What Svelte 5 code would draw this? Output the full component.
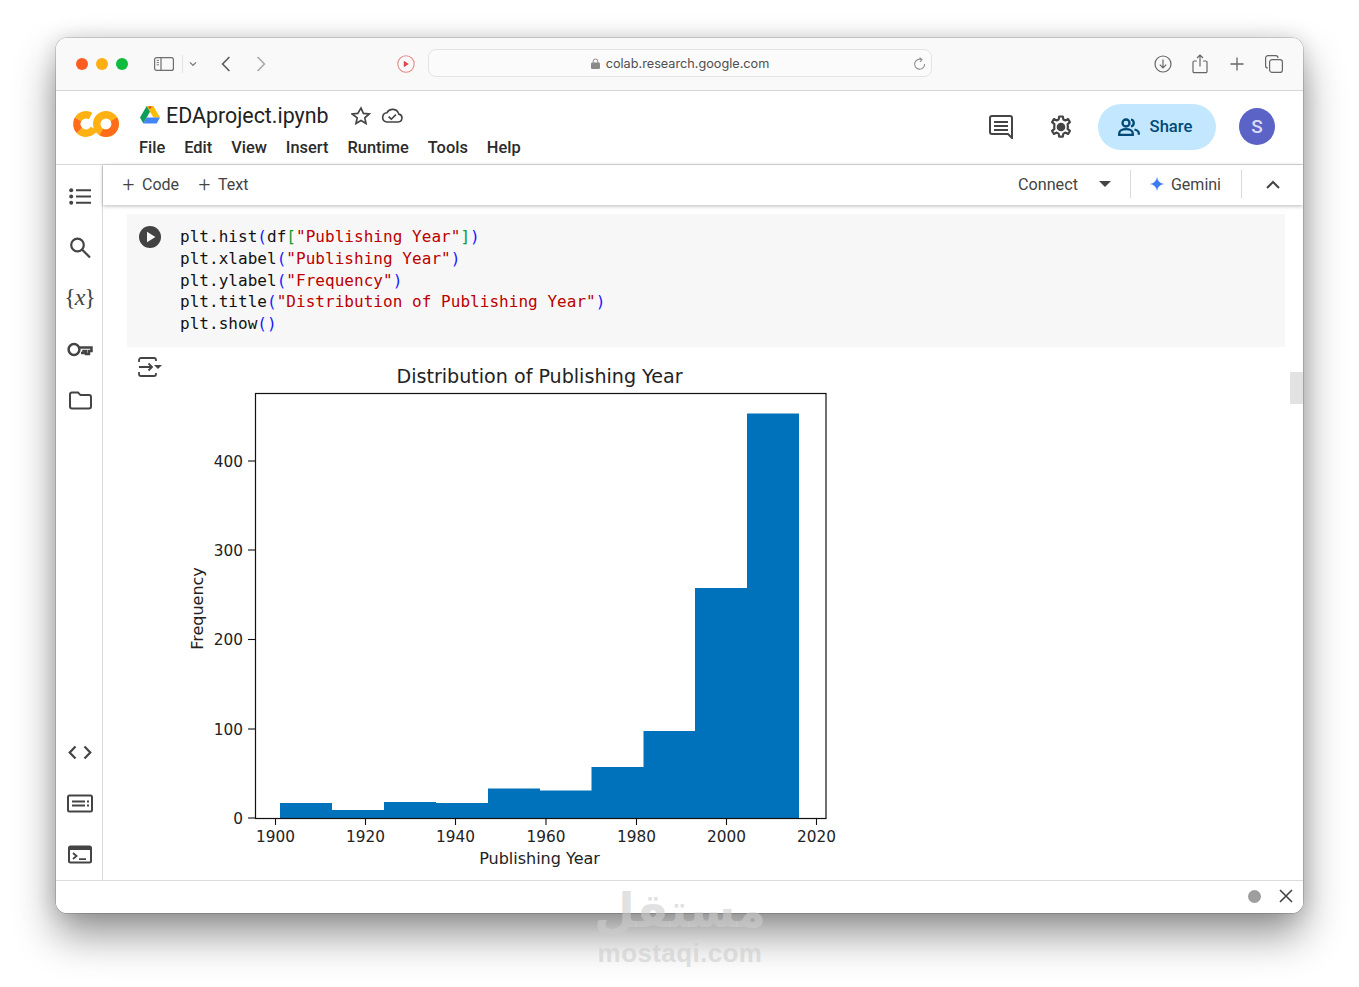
<script>
  const menus = ['File', 'Edit', 'View', 'Insert', 'Runtime', 'Tools', 'Help'];
  const bars = [
    [280, 803], [332, 810], [384, 802], [436, 803], [488, 788.5],
    [540, 790.5], [591.5, 767], [643.5, 731], [695, 588], [747, 413.5]
  ];
  const barPath = 'M280 818 ' + bars.map((b, i) => `L${b[0]} ${b[1]} L${i < 9 ? bars[i + 1][0] : 799} ${b[1]}`).join(' ') + ' L799 818Z';
  const xTicks = [[275.5, 1900], [365.5, 1920], [455.5, 1940], [546, 1960], [636.5, 1980], [726.5, 2000], [816.5, 2020]];
  const yTicks = [[818, 0], [729, 100], [639.5, 200], [550, 300], [461, 400]];
</script>

<div class="page">
  <div class="window">
    <header class="browser">
      <div class="lights"><i class="r"></i><i class="y"></i><i class="gr"></i></div>
      <svg class="side" width="20" height="14" viewBox="0 0 20 14" fill="none" stroke="#6e6e6e" stroke-width="1.2"><rect x=".6" y=".6" width="18.8" height="12.8" rx="2"/><path d="M7 .6v12.8"/><path d="M2.6 3.4h2.4M2.6 5.6h2.4M2.6 7.8h2.4" stroke-width=".9"/></svg>
      <span class="vsep"></span>
      <svg class="chev" width="8" height="6" viewBox="0 0 8 6" fill="none" stroke="#777" stroke-width="1.3"><path d="M1 1.4l3 3 3-3"/></svg>
      <svg class="back" width="10" height="16" viewBox="0 0 10 16" fill="none" stroke="#5a5a5a" stroke-width="1.6"><path d="M8.4 1L1.6 8l6.8 7"/></svg>
      <svg class="fwd" width="10" height="16" viewBox="0 0 10 16" fill="none" stroke="#a8a8a8" stroke-width="1.6"><path d="M1.6 1l6.8 7-6.8 7"/></svg>
      <svg class="rec" width="18" height="18" viewBox="0 0 18 18"><circle cx="9" cy="9" r="8.2" fill="none" stroke="#e28a8a" stroke-width="1.1"/><path d="M6.8 5.8l5 3.2-5 3.2z" fill="#d9484f"/></svg>
      <div class="url">
        <svg width="9" height="11" viewBox="0 0 9 11"><path d="M2.2 5V3.3a2.3 2.3 0 014.6 0V5" fill="none" stroke="#8a8a8a" stroke-width="1"/><rect y="4.6" width="9" height="6.4" rx="1.2" fill="#8a8a8a"/></svg>
        <span>colab.research.google.com</span>
        <svg class="reload" width="13" height="14" viewBox="0 0 13 14" fill="none" stroke="#8c8c8c" stroke-width="1.1"><path d="M8.6 2.6A5 5 0 1 0 11.6 7"/><path d="M6.6 .6l2.4 2-2 2.4"/></svg>
      </div>
      <div class="browser-right">
        <span><svg width="18" height="18" viewBox="0 0 18 18" fill="none" stroke="#666" stroke-width="1.2"><circle cx="9" cy="9" r="8"/><path d="M9 4.6v8M5.8 9.6L9 12.8l3.2-3.2"/></svg></span>
        <span><svg width="16" height="20" viewBox="0 0 16 20" fill="none" stroke="#666" stroke-width="1.2"><path d="M5 7H2.2a1.2 1.2 0 00-1.2 1.2v9.2a1.2 1.2 0 001.2 1.2h11.6a1.2 1.2 0 001.2-1.2V8.2A1.2 1.2 0 0013.800 7H11"/><path d="M8 12.500V1.200M5 4l3-3 3 3"/></svg></span>
        <span><svg width="14" height="14" viewBox="0 0 14 14" fill="none" stroke="#666" stroke-width="1.3"><path d="M7 .5v13M.5 7h13"/></svg></span>
        <span><svg width="18" height="18" viewBox="0 0 18 18" fill="none" stroke="#666" stroke-width="1.2"><rect x="4.600" y="4.600" width="12.800" height="12.800" rx="2.500"/><path d="M2.900 13A2.300 2.300 0 01.600 10.700V3A2.400 2.400 0 013 .6h7.700A2.300 2.300 0 0113 2.900"/></svg></span>
      </div>
    </header>

    <section class="head">
      <svg class="logo" width="48" height="28" viewBox="0 0 48 28" fill="none" stroke-width="7.500">
        <path d="M7.500 20.500A9.250 9.250 0 0 0 22 18.600" stroke="#ffb114"/>
        <path d="M18.600 6A9.250 9.250 0 0 0 6 9.400" stroke="#ffb114"/>
        <path d="M6 9.400A9.250 9.250 0 0 0 7.500 20.500" stroke="#ff6d1b"/>
        <circle cx="34" cy="14" r="9.250" stroke="#ffb114"/>
        <path d="M42 9.400A9.250 9.250 0 0 1 29.400 22" stroke="#ff6d1b"/>
      </svg>
      <div class="doc">
        <div class="doc-title">
          <svg class="drive" width="20" height="18" viewBox="0 0 20 18"><path d="M6.700 0h6.600l6.700 11.600h-6.600z" fill="#fbbc04"/><path d="M6.700 0L0 11.600l3.300 5.800L10 5.800z" fill="#0f9d58"/><path d="M6.700 11.600H20l-3.300 5.800H3.300z" fill="#4285f4"/><path d="M8 .4h4L10 3.200z" fill="#ea4335"/></svg>
          <span class="name">EDAproject.ipynb</span>
          <svg class="star" width="20" height="19" viewBox="0 0 24 23" fill="none" stroke="#444" stroke-width="2"><path d="M12 2.500l2.900 6.400 7 .7-5.300 4.700 1.500 6.900-6.100-3.600-6.100 3.600 1.500-6.900L1.100 9.600l7-.7z"/></svg>
          <svg class="cloud" width="22" height="15" viewBox="0 0 22 15" fill="none" stroke="#444" stroke-width="1.600"><path d="M5.500 14h11.700a4 4 0 00.600-7.900A6.400 6.400 0 006 4.700 4.700 4.700 0 005.500 14z"/><path d="M7.600 8.600l2.700 2.600 4.600-4.600"/></svg>
        </div>
        <nav class="menu">{#each menus as m}<span>{m}</span>{/each}</nav>
      </div>
      <div class="head-right">
        <svg class="cmt" width="24" height="24" viewBox="0 0 24 24"><path d="M23 3a2 2 0 00-2-2H3a2 2 0 00-2 2v14a2 2 0 002 2h16l4 4z" fill="none" stroke="#444" stroke-width="2"/><path d="M5 6h14v2H5zM5 10h14v2H5zM5 14h14v2H5z" fill="#444"/></svg>
        <svg class="gear" width="24" height="24" viewBox="0 0 24 24" fill="none" stroke="#444" stroke-width="2.200"><path d="M10.200 1.500h3.600l.6 3 1.900.9 2.800-1.300 1.800 3-2.300 2 .2 1.900.1 1-.3 1.900 2.300 2-1.800 3-2.800-1.300-1.900 1-.6 3h-3.600l-.6-3-1.900-1-2.800 1.300-1.800-3 2.300-2-.2-1.900.1-1 .1-1.900-2.300-2 1.800-3 2.800 1.300 1.900-.9z" stroke-linejoin="round"/><circle cx="12" cy="12" r="4.300" fill="#444" stroke="none"/></svg>
        <button class="share">
          <svg width="22" height="18" viewBox="0 0 22 18" fill="none" stroke="#004a77" stroke-width="2.300"><circle cx="8" cy="5" r="3.500"/><path d="M1.200 16.800v-1.400c0-2.800 3.300-4.200 6.800-4.200s6.800 1.400 6.800 4.200v1.400z"/><path d="M13 1.500a3.600 3.600 0 010 7M16.500 11.500c2.500.6 4.300 1.800 4.300 3.900v1.400"/></svg>
          Share
        </button>
        <span class="avatar">S</span>
      </div>
    </section>

    <section class="body">
      <aside class="rail">
        <div class="rail-group">
          <svg width="22" height="18" viewBox="0 0 22 18" fill="#444"><circle cx="2.200" cy="2.800" r="2"/><circle cx="2.200" cy="9" r="2"/><circle cx="2.200" cy="15.200" r="2"/><path d="M7 1.800h15v2H7zM7 8h15v2H7zM7 14.200h15v2H7z"/></svg>
          <svg width="22" height="22" viewBox="0 0 22 22" fill="none" stroke="#444" stroke-width="2.200"><circle cx="8.500" cy="8.500" r="6.300"/><path d="M13 13l8 8"/></svg>
          <span class="var">{'{'}<em>x</em>{'}'}</span>
          <svg width="26" height="16" viewBox="0 0 26 16" fill="none" stroke="#444" stroke-width="2.500"><circle cx="7" cy="8" r="5.400"/><path d="M12 6h12.500v3.600H22v3h-3V9.600h-2.500v2H14"/></svg>
          <svg width="23" height="18" viewBox="0 0 23 18" fill="none" stroke="#444" stroke-width="2"><path d="M1 3a2 2 0 012-2h6l2.500 2.600H20a2 2 0 012 2V15a2 2 0 01-2 2H3a2 2 0 01-2-2z"/></svg>
        </div>
        <div class="rail-group bottom">
          <svg width="24" height="14" viewBox="0 0 24 14" fill="none" stroke="#444" stroke-width="2.200"><path d="M7.500 1L1.700 7l5.800 6M16.500 1l5.800 6-5.800 6"/></svg>
          <svg width="26" height="18" viewBox="0 0 26 18"><rect x="1" y="1" width="24" height="16" rx="1.500" fill="none" stroke="#444" stroke-width="2"/><path d="M5 6h13v2H5zM5 10h13v2H5zM20 6h2v2h-2zM20 10h2v2h-2z" fill="#444"/></svg>
          <svg width="24" height="18" viewBox="0 0 24 18"><rect x="1" y="1" width="22" height="16" rx="1.500" fill="none" stroke="#444" stroke-width="2"/><path d="M1 1h22v3.500H1z" fill="#444"/><path d="M5 7.500l3.500 3-3.500 3" fill="none" stroke="#444" stroke-width="1.800"/><path d="M11 12.800h7v1.700h-7z" fill="#444"/></svg>
        </div>
      </aside>

      <div class="main">
        <div class="toolbar">
          <span class="tbtn"><b>+</b>Code</span>
          <span class="tbtn"><b>+</b>Text</span>
          <span class="spacer"></span>
          <span class="connect">Connect</span>
          <svg class="caret" width="12" height="6" viewBox="0 0 12 6"><path d="M0 0h12L6 6z" fill="#444"/></svg>
          <span class="tsep"></span>
          <svg class="spark" width="14" height="14" viewBox="0 0 14 14"><path d="M7 0c.6 4 3 6.400 7 7-4 .6-6.400 3-7 7-.6-4-3-6.400-7-7 4-.6 6.400-3 7-7z" fill="#3f7df5"/></svg>
          <span class="gemini">Gemini</span>
          <span class="tsep two"></span>
          <svg class="up" width="14" height="9" viewBox="0 0 14 9" fill="none" stroke="#444" stroke-width="2"><path d="M1 8l6-6 6 6"/></svg>
        </div>

        <div class="scroll">
          <div class="cell">
            <span class="run"><svg width="22" height="22" viewBox="0 0 22 22"><circle cx="11" cy="11" r="11" fill="#424242"/><path d="M8 5.800l8.400 5.200L8 16.200z" fill="#f7f7f7"/></svg></span>
            <pre class="code"><code>plt.hist<span class="b">(</span>df<span class="br">[</span><span class="s">"Publishing Year"</span><span class="br">]</span><span class="b">)</span>
plt.xlabel<span class="b">(</span><span class="s">"Publishing Year"</span><span class="b">)</span>
plt.ylabel<span class="b">(</span><span class="s">"Frequency"</span><span class="b">)</span>
plt.title<span class="b">(</span><span class="s">"Distribution of Publishing Year"</span><span class="b">)</span>
plt.show<span class="b">()</span></code></pre>
          </div>
          <div class="output">
            <svg class="out-ic" width="25" height="20" viewBox="0 0 25 20" fill="none" stroke="#444" stroke-width="1.800"><path d="M1 5V3a2 2 0 012-2h13a2 2 0 012 2v1M1 15v2a2 2 0 002 2h13a2 2 0 002-2v-1"/><path d="M1 10h13M10.500 6.500L14 10l-3.500 3.500"/><path d="M16 8h8l-4 4z" fill="#444" stroke="none"/></svg>
            <svg class="chart" width="700" height="530" viewBox="170 355 700 530">
              <path d={barPath} fill="#0072bb"/>
              <rect x="255.500" y="393.500" width="570.500" height="425" fill="none" stroke="#111" stroke-width="1.200"/>
              {#each xTicks as t}
                <path d="M{t[0]} 818v7" stroke="#111" stroke-width="1.100"/>
                <text x={t[0]} y="842" text-anchor="middle">{t[1]}</text>
              {/each}
              {#each yTicks as t}
                <path d="M248 {t[0]}h7" stroke="#111" stroke-width="1.100"/>
                <text x="243" y={t[0] + 5.500} text-anchor="end">{t[1]}</text>
              {/each}
              <text class="ttl" x="539.500" y="383" text-anchor="middle">Distribution of Publishing Year</text>
              <text class="lbl" x="539.500" y="864" text-anchor="middle">Publishing Year</text>
              <text class="lbl" x="203" y="608.500" text-anchor="middle" transform="rotate(-90 203 608.500)">Frequency</text>
            </svg>
          </div>
          <span class="thumb"></span>
        </div>
      </div>
    </section>

    <footer class="status">
      <i class="dot"></i>
      <svg width="14" height="14" viewBox="0 0 14 14" fill="none" stroke="#444" stroke-width="1.600"><path d="M1 1l12 12M13 1L1 13"/></svg>
    </footer>
  </div>

  <div class="mark"><div class="ar">مستقل</div><div class="en">mostaqi.com</div></div>
</div>

<style>
  :global(body) { margin: 0; background: #fff; }
  .page { position: relative; height: 987px; padding: 38px 56px 0; box-sizing: border-box; overflow: hidden; font-family: Roboto, "Liberation Sans", sans-serif; }
  .window { width: 1247px; height: 875px; border-radius: 11px; background: #fff; display: flex; flex-direction: column; overflow: hidden; box-shadow: 0 0 0 .5px rgba(0,0,0,.28), 0 22px 42px rgba(0,0,0,.42), 0 0 20px rgba(0,0,0,.14); }

  .browser { height: 52px; flex: none; display: flex; align-items: center; background: #f9f9f9; border-bottom: 1px solid #d6d6d6; padding-left: 20px; box-sizing: content-box; }
  .lights { display: flex; gap: 8px; }
  .lights i { width: 12px; height: 12px; border-radius: 50%; display: block; }
  .r { background: #fb5d1f; } .y { background: #ffae14; } .gr { background: #0fbb3c; }
  .side { margin-left: 26px; }
  .vsep { width: 1px; height: 18px; background: #e2e2e2; margin-left: 8px; }
  .chev { margin-left: 6px; }
  .back { margin-left: 24px; }
  .fwd { margin-left: 25px; }
  .rec { margin-left: 131px; }
  .url { width: 504px; height: 28px; margin: 0 0 2px 13px; padding-top: 1px; border: 1px solid #e3e3e3; border-radius: 8px; box-sizing: border-box; background: #fbfbfb; display: flex; align-items: center; justify-content: center; gap: 6px; font: 12.700px Inter, "Liberation Sans", sans-serif; color: #4f4f4f; position: relative; }
  .reload { position: absolute; right: 5px; top: 7px; }
  .browser-right { margin-left: auto; margin-right: 11px; display: flex; align-items: center; }
  .browser-right span { width: 37px; display: flex; justify-content: center; }

  .head { height: 73px; flex: none; border-bottom: 1px solid #d8d8d8; display: flex; position: relative; }
  .logo { margin: 19px 0 0 16px; }
  .doc { margin-left: 19px; display: flex; flex-direction: column; }
  .doc-title { display: flex; align-items: center; height: 24px; margin-top: 12px; }
  .drive { margin-left: 1px; }
  .name { font-size: 21.400px; color: #222; margin-left: 6px; }
  .star { margin-left: 22px; }
  .cloud { margin-left: 10px; }
  .menu { display: flex; gap: 19px; margin-top: 11px; font-size: 16.400px; font-weight: 500; color: #2b2b2b; line-height: 20px; }
  .head-right { margin-left: auto; display: flex; align-items: center; padding: 0 28px 2px 0; }
  .gear { margin-left: 36px; }
  .share { margin-left: 25px; width: 118px; height: 46px; border: 0; border-radius: 23px; background: #c2e7ff; color: #004a77; font: 500 16.600px Roboto, sans-serif; display: flex; align-items: center; justify-content: center; gap: 10px; padding: 0 4px 0 0; }
  .avatar { margin-left: 23px; width: 36px; height: 37px; border-radius: 50%; background: #5c63c7; color: #dcdcf8; display: flex; align-items: center; justify-content: center; font-size: 19px; font-weight: 500; }

  .body { flex: 1; display: flex; min-height: 0; border-bottom: 1px solid #dcdcdc; }
  .rail { width: 47px; flex: none; box-sizing: border-box; padding-left: 2px; border-right: 1px solid #d8d8d8; display: flex; flex-direction: column; justify-content: space-between; }
  .rail-group { display: flex; flex-direction: column; align-items: center; padding-top: 5.500px; }
  .rail-group > * { height: 51px; flex: none; box-sizing: border-box; }
  .rail-group.bottom { padding: 0; }
  .var { font: 24px/51px "Liberation Serif", serif; color: #444; display: flex; align-items: center; padding-bottom: 2px; }
  .var em { font-style: italic; margin: 0 -1px; }

  .main { flex: 1; min-width: 0; display: flex; flex-direction: column; }
  .toolbar { height: 40px; flex: none; box-sizing: border-box; display: flex; align-items: center; padding: 0 0 2px 19px; font-size: 16px; color: #444; box-shadow: 0 1px 4px rgba(0,0,0,.28); position: relative; z-index: 1; background: #fff; }
  .tbtn { display: flex; align-items: center; gap: 7px; margin-right: 19px; }
  .tbtn b { font-weight: 300; font-size: 21px; line-height: 20px; width: 13px; text-align: center; }
  .spacer { flex: 1; }
  .connect { font-size: 16.200px; }
  .caret { margin-left: 21px; }
  .tsep { width: 1px; height: 28px; background: #dadada; margin-left: 19px; }
  .spark { margin-left: 19px; }
  .gemini { margin-left: 7px; }
  .tsep.two { margin-left: 20px; }
  .up { margin: 0 23px 0 24px; }

  .scroll { flex: 1; position: relative; min-height: 0; overflow: hidden; padding: 9px 18px 0 24px; }
  .cell { background: #f7f7f7; height: 133px; display: flex; }
  .run { margin: 12px 0 0 12px; height: 22px; }
  .code { margin: 12px 0 0 19px; font: 16px/21.750px "DejaVu Sans Mono", monospace; letter-spacing: .035px; color: #111; }
  .code code { font: inherit; }
  .s { color: #b00; } .b { color: #1a1aff; } .br { color: #0d9c2f; }
  .output { position: relative; height: 530px; }
  .out-ic { position: absolute; left: 11px; top: 10px; }
  .chart { position: absolute; left: 43px; top: 8px; }
  .chart text { font: 15.300px "DejaVu Sans", sans-serif; fill: #222; }
  .chart .ttl { font-size: 19.100px; }
  .chart .lbl { font-size: 16px; }
  .thumb { position: absolute; right: 0; top: 167px; width: 13px; height: 32px; background: #e2e2e2; }

  .status { height: 32px; flex: none; box-sizing: border-box; display: flex; align-items: center; justify-content: flex-end; gap: 18px; padding: 0 10px 2px 0; background: #fff; }
  .dot { width: 13px; height: 13px; border-radius: 50%; background: #9e9e9e; }

  .mark { position: absolute; left: 560px; top: 880px; width: 240px; text-align: center; color: rgba(205,205,205,.62); font-weight: 700; pointer-events: none; }
  .ar { font: 700 47px/54px "DejaVu Sans", sans-serif; padding-top: 4px; }
  .en { font: 700 26px/30px "Liberation Sans", sans-serif; letter-spacing: .4px; }
</style>
